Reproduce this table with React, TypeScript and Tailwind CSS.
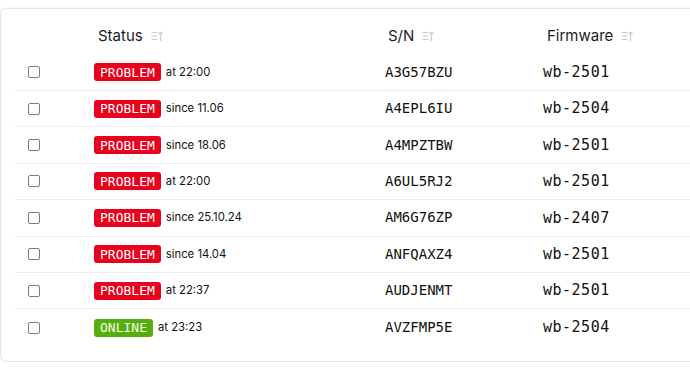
import React from 'react';

type Row = {
  status: 'PROBLEM' | 'ONLINE';
  when: string;
  sn: string;
  fw: string;
};

const rows: Row[] = [
  { status: 'PROBLEM', when: 'at 22:00', sn: 'A3G57BZU', fw: 'wb-2501' },
  { status: 'PROBLEM', when: 'since 11.06', sn: 'A4EPL6IU', fw: 'wb-2504' },
  { status: 'PROBLEM', when: 'since 18.06', sn: 'A4MPZTBW', fw: 'wb-2501' },
  { status: 'PROBLEM', when: 'at 22:00', sn: 'A6UL5RJ2', fw: 'wb-2501' },
  { status: 'PROBLEM', when: 'since 25.10.24', sn: 'AM6G76ZP', fw: 'wb-2407' },
  { status: 'PROBLEM', when: 'since 14.04', sn: 'ANFQAXZ4', fw: 'wb-2501' },
  { status: 'PROBLEM', when: 'at 22:37', sn: 'AUDJENMT', fw: 'wb-2501' },
  { status: 'ONLINE', when: 'at 23:23', sn: 'AVZFMP5E', fw: 'wb-2504' },
];

const SortIcon = () => (
  <svg width="12" height="12" viewBox="0 0 12 12" fill="none" stroke="#c9cbd3" strokeWidth="1.2" strokeLinecap="round">
    <path d="M1 2.5h5M1 6h5M1 9.5h5" />
    <path d="M9.5 10.5V2M7.6 3.9l1.9-1.9 1.9 1.9" />
  </svg>
);

const HeaderCell = ({ label, pad }: { label: string; pad: string }) => (
  <div className={`flex items-center gap-2 ${pad}`}>
    <span className="text-[15px] text-[#1b1b1f]">{label}</span>
    <SortIcon />
  </div>
);

const cols = 'grid grid-cols-[76px_290px_158px_1fr]';
const mono = { fontFamily: '"DejaVu Sans Mono", monospace' };

export default function App() {
  return (
    <div className="w-[690px] h-[369px] overflow-hidden bg-white" style={{ fontFamily: 'Inter, "Noto Sans", sans-serif' }}>
      <div className="mt-2 w-[730px] rounded-md border border-[#e4e4e9] bg-white pb-[15px] shadow-[0_-1px_2px_rgba(0,0,0,0.04)]">
        <div className={`${cols} ml-[14px] h-[45.5px] pt-[16px] items-start`}>
          <div />
          <HeaderCell label="Status" pad="pl-[7px]" />
          <HeaderCell label="S/N" pad="pl-[7px]" />
          <HeaderCell label="Firmware" pad="pl-[8px]" />
        </div>
        <div className="ml-[14px]">
          {rows.map((r, i) => (
            <div
              key={r.sn}
              className={`${cols} h-[36.43px] items-center ${i < rows.length - 1 ? 'border-b border-[#ececf0]' : ''}`}
            >
              <div className="pl-[13px] flex items-center">
                <span className="block w-[12px] h-[12px] rounded-[2px] border border-[#7a7a80] bg-white" />
              </div>
              <div className="flex items-center gap-[5px] pl-[3px]">
                <span
                  className={`inline-flex items-center h-[18px] px-[6px] rounded-[3px] text-[13px] leading-none ${
                    r.status === 'PROBLEM' ? 'bg-[#e8001c] text-white' : 'bg-[#55ae10] text-[#f4ffe0]'
                  }`}
                  style={mono}
                >
                  {r.status}
                </span>
                <span className="text-[11.3px] text-[#111]">{r.when}</span>
              </div>
              <div className="pl-[4px] text-[14px] text-[#111]" style={mono}>
                {r.sn}
              </div>
              <div className="pl-[4px] text-[15px] tracking-[0.5px] text-[#111]" style={mono}>
                {r.fw}
              </div>
            </div>
          ))}
        </div>
      </div>
    </div>
  );
}
